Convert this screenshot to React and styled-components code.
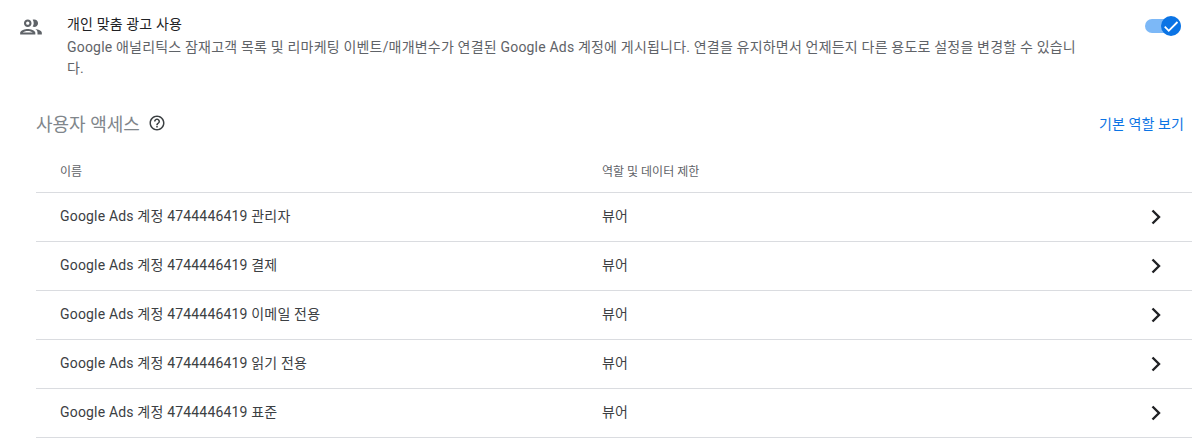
import React from 'react'
import styled, { createGlobalStyle } from 'styled-components'

const GlobalStyle = createGlobalStyle`
    html, body {
        margin: 0;
        padding: 0;
        background: #fff;
    }
    body {
        font-family: Roboto, "Noto Sans CJK KR", sans-serif;
        color: #3c4043;
    }
`

const ROWS = ["관리자", "결제", "이메일 전용", "읽기 전용", "표준"]

const Page = styled.div`
    width: 1201px;
    height: 446px;
    overflow: hidden;
    padding-right: 9px;
    box-sizing: border-box;
`
const AdRow = styled.div`
    display: flex;
    align-items: flex-start;
    padding: 14px 11px 0 18px;
    height: 99px;
    box-sizing: border-box;
`
const IconBox = styled.div`
    width: 26px;
    height: 26px;
    margin-right: 23px;
    color: #5f6368;
`
const AdText = styled.div`
    width: 1012px;
    flex: none;
`
const AdTitle = styled.div`
    font-size: 14px;
    line-height: 20px;
    letter-spacing: 0.14px;
    color: #202124;
`
const AdDesc = styled.div`
    font-size: 14px;
    line-height: 21px;
    margin-top: 3px;
    letter-spacing: 0.19px;
    color: #5f6368;
`
const Toggle = styled.div`
    position: relative;
    width: 36px;
    height: 14px;
    margin: 5px 0 0 auto;
    border-radius: 7px;
    background: #7cb8f7;
`
const ToggleKnob = styled.div`
    position: absolute;
    top: -3px;
    right: 0;
    width: 20px;
    height: 20px;
    border-radius: 50%;
    background: #0b74e5;
    display: flex;
    align-items: center;
    justify-content: center;
`
const SectionHead = styled.div`
    display: flex;
    align-items: center;
    justify-content: space-between;
    height: 48px;
    padding: 0 8px 0 36px;
`
const SectionLeft = styled.div`
    display: flex;
    align-items: center;
    gap: 8px;
`
const SectionTitle = styled.div`
    font-size: 18px;
    color: #80868b;
`
const HelpIcon = styled.svg`
    width: 18px;
    height: 18px;
    color: #3c4043;
`
const RoleLink = styled.a`
    font-size: 14px;
    letter-spacing: 0.1px;
    color: #0b74e5;
`
const Table = styled.div`
    margin-left: 36px;
`
const HeadRow = styled.div`
    display: grid;
    grid-template-columns: 542px 1fr;
    align-items: center;
    height: 46px;
    padding: 1px 0 0 24px;
    border-bottom: 1px solid #dadce0;
    font-size: 12px;
    color: #5f6368;
    box-sizing: border-box;
`
const Row = styled.div`
    display: grid;
    grid-template-columns: 542px 1fr 24px;
    align-items: center;
    height: 49px;
    padding: 0 24px 4px;
    border-bottom: 1px solid #dadce0;
    font-size: 14px;
    color: #3c4043;
    box-sizing: border-box;
    letter-spacing: 0.18px;
`
const Chevron = styled.svg`
    width: 24px;
    height: 24px;
    margin-top: 4px;
    color: #202124;
`

export default function App() {
    return (
        <>
            <GlobalStyle />
            <Page>
                <AdRow>
                    <IconBox>
                        <svg viewBox="0 0 24 24" width="26" height="26" fill="currentColor">
                            <path d="M9 13.75c-2.34 0-7 1.17-7 3.5V19h14v-1.75c0-2.33-4.66-3.5-7-3.5zM4.34 17c.84-.58 2.87-1.25 4.66-1.25s3.82.67 4.66 1.25H4.34zM9 12c1.93 0 3.5-1.57 3.5-3.5S10.93 5 9 5 5.500 6.570 5.500 8.500 7.070 12 9 12zm0-5c.83 0 1.500.67 1.500 1.500S9.830 10 9 10s-1.500-.67-1.500-1.500S8.170 7 9 7zm7.040 6.810c1.160.84 1.960 1.960 1.960 3.440V19h4v-1.750c0-2.020-3.500-3.170-5.960-3.440zM15 12c1.930 0 3.500-1.570 3.500-3.500S16.930 5 15 5c-.54 0-1.040.13-1.500.35.630.89 1 1.980 1 3.150s-.37 2.260-1 3.150c.46.220.96.350 1.500.350z" />
                        </svg>
                    </IconBox>
                    <AdText>
                        <AdTitle>개인 맞춤 광고 사용</AdTitle>
                        <AdDesc>Google 애널리틱스 잠재고객 목록 및 리마케팅 이벤트/매개변수가 연결된 Google Ads 계정에 게시됩니다. 연결을 유지하면서 언제든지 다른 용도로 설정을 변경할 수 있습니다.</AdDesc>
                    </AdText>
                    <Toggle>
                        <ToggleKnob>
                            <svg viewBox="0 0 24 24" width="18" height="18" fill="#fff">
                                <path d="M9 16.600 4.500 12l-1.700 1.700L9 20 21.500 7.500 19.800 5.800z" />
                            </svg>
                        </ToggleKnob>
                    </Toggle>
                </AdRow>
                <SectionHead>
                    <SectionLeft>
                        <SectionTitle>사용자 액세스</SectionTitle>
                        <HelpIcon viewBox="0 0 24 24" fill="currentColor">
                            <path d="M11 18h2v-2h-2v2zm1-16C6.480 2 2 6.480 2 12s4.480 10 10 10 10-4.480 10-10S17.520 2 12 2zm0 18c-4.410 0-8-3.590-8-8s3.590-8 8-8 8 3.590 8 8-3.590 8-8 8zm0-14c-2.210 0-4 1.790-4 4h2c0-1.100.9-2 2-2s2 .9 2 2c0 2-3 1.750-3 5h2c0-2.250 3-2.500 3-5 0-2.210-1.790-4-4-4z" />
                        </HelpIcon>
                    </SectionLeft>
                    <RoleLink>기본 역할 보기</RoleLink>
                </SectionHead>
                <Table>
                    <HeadRow>
                        <div>이름</div>
                        <div>역할 및 데이터 제한</div>
                    </HeadRow>
                    {ROWS.map((name, key) => (
                        <Row key={key}>
                            <div>{`Google Ads 계정 4744446419 ${name}`}</div>
                            <div>뷰어</div>
                            <Chevron viewBox="0 0 24 24" fill="none" stroke="currentColor" strokeWidth="2.4">
                                <path d="M8.500 5.500 15 12l-6.500 6.500" />
                            </Chevron>
                        </Row>
                    ))}
                </Table>
            </Page>
        </>
    )
}
